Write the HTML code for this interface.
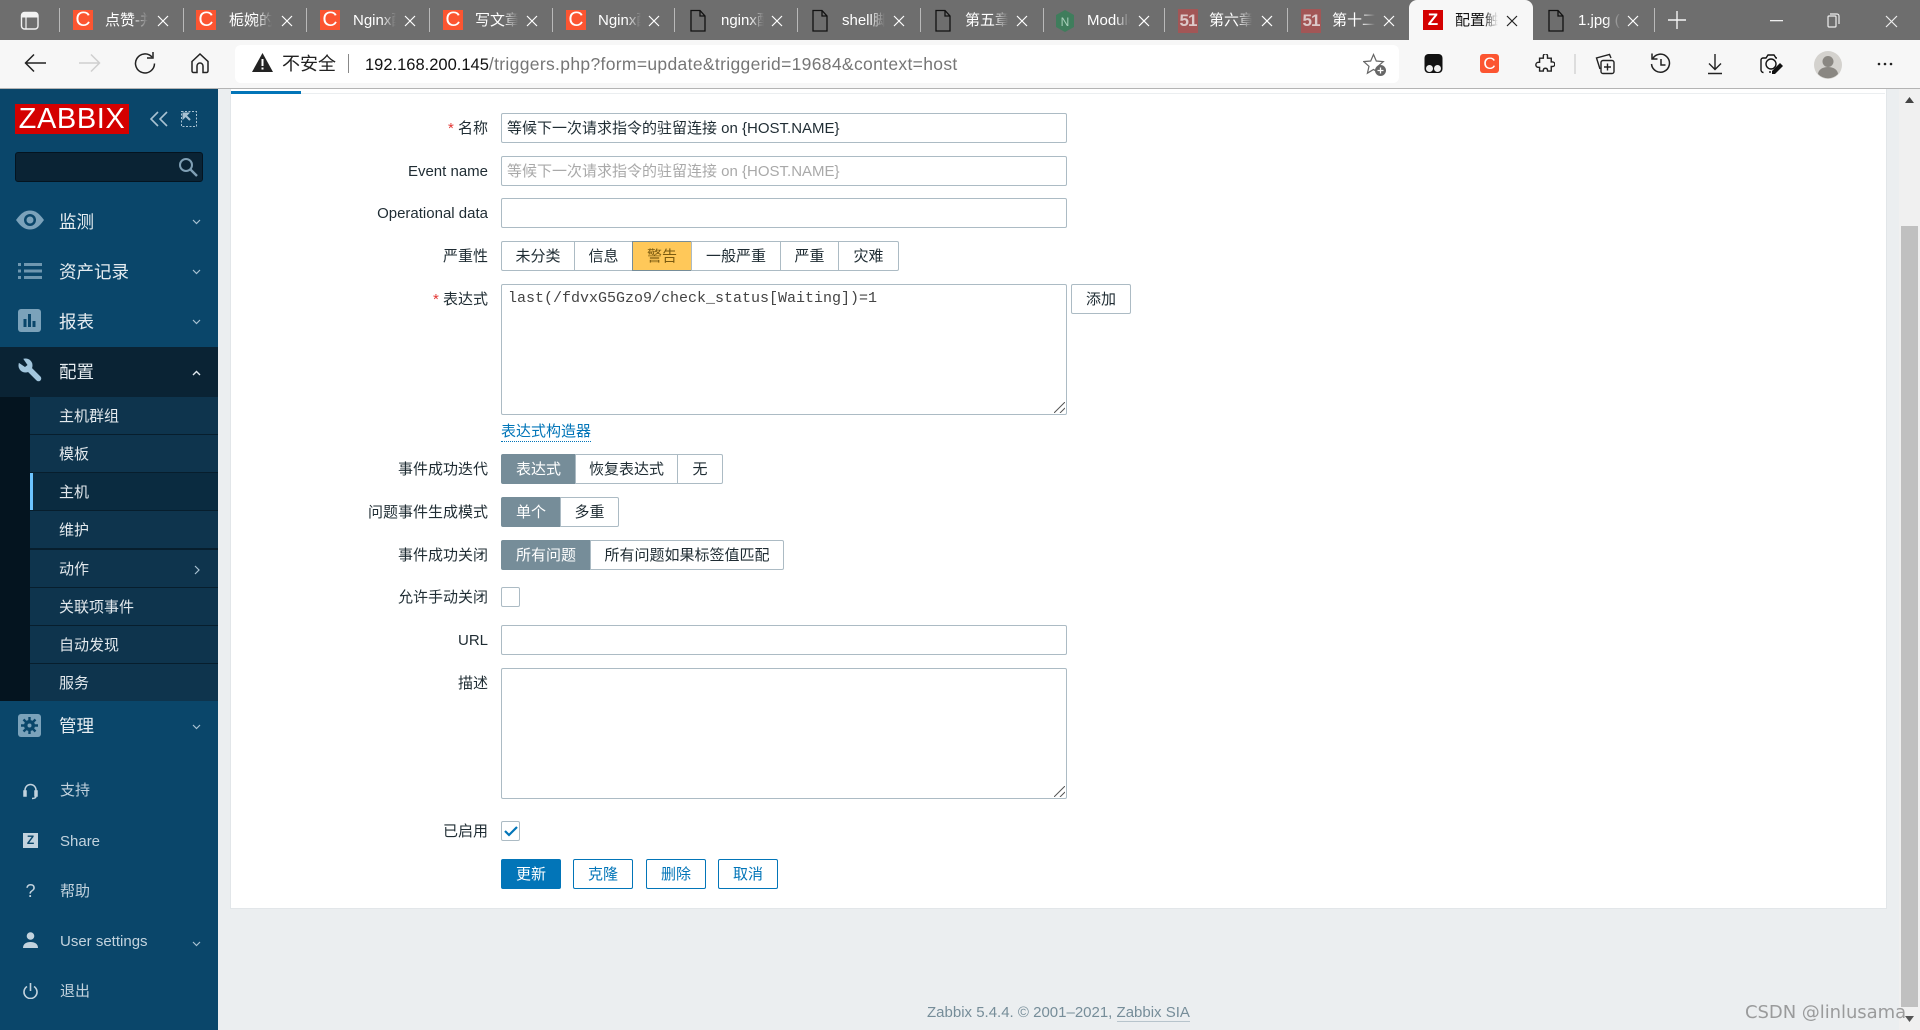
<!DOCTYPE html>
<html lang="zh"><head><meta charset="utf-8"><title>配置触发器</title>
<style>
*{box-sizing:border-box}
html,body{margin:0;padding:0;width:1920px;height:1030px;overflow:hidden;background:#ebeef0;font-family:"Liberation Sans","Noto Sans CJK SC",sans-serif;color:#1f2c33}
.a,.a>*{position:absolute}
#root>*{position:absolute}
.t{white-space:nowrap}
.sep{width:1px;height:24px;top:8px;background:#b9b9b9}
.fav{width:20px;height:20px;top:10px}
.c{background:#fc5531;color:#fff;font-size:21px;line-height:20px;text-align:center;font-weight:400}
.tt{top:10px;height:22px;line-height:21px;font-size:15px;color:#fff;width:43px;overflow:hidden;white-space:nowrap;-webkit-mask-image:linear-gradient(90deg,#000 65%,transparent 100%);mask-image:linear-gradient(90deg,#000 65%,transparent 100%)}
.x{width:12px;height:12px;top:15px}
.l{left:300px;width:188px;text-align:right;font-size:15px;line-height:20px;white-space:nowrap}
.r{color:#e33734}
.in{left:501px;width:566px;height:30px;background:#fff;border:1px solid #acbbc4;border-radius:2px;font-size:15px;line-height:30px;padding-left:5px;white-space:nowrap}
.s{top:0;height:100%;border:1px solid #acbbc4;background:#fff;text-align:center;font-size:15px;line-height:30px;color:#1f2c33;margin-right:-1px;white-space:nowrap}
.on{background:#768d99;border-color:#768d99;color:#fff}
.b{top:859px;height:30px;width:60px;border:1px solid #0275b8;border-radius:2px;color:#0275b8;background:#fff;text-align:center;font-size:15px;line-height:30px}
.cb{left:501px;width:19px;height:20px;background:#fff;border:1px solid #acbbc4;border-radius:2px}
.m{left:59px;font-size:17.5px;color:#e6edf1;line-height:24px;white-space:nowrap}
.ch{left:192px;width:9px;height:6px}
.sub{left:30px;width:188px;height:38px;background:#0e344d;border-bottom:1px solid #071e2d;font-size:15px;color:#e3e9ed;line-height:39px;padding-left:29px;white-space:nowrap}
.u{left:60px;font-size:15px;color:#c3d3de;line-height:20px;white-space:nowrap}
.ff{left:0;background:#a25656;color:#dcc8c8;font:bold 17px/23px 'Liberation Sans';text-align:center;height:24px;width:20px;top:9px;letter-spacing:-1px}
</style></head><body>
<div id="root">
<svg width="0" height="0" style="position:absolute"><defs>
<symbol id="x" viewBox="0 0 12 12"><path d="M1 1 11 11M11 1 1 11" stroke="#fff" stroke-width="1.2" fill="none"/></symbol>
<symbol id="xd" viewBox="0 0 12 12"><path d="M1 1 11 11M11 1 1 11" stroke="#222" stroke-width="1.2" fill="none"/></symbol>
<symbol id="f" viewBox="0 0 20 24"><path d="M3 1.500h9l5 5.500v15H3zM12 1.500V7h5" stroke="#111" stroke-width="1.3" fill="none"/></symbol>
<symbol id="d" viewBox="0 0 9 6"><path d="M1 1l3.500 3.500L8 1" stroke="#a9c2d2" stroke-width="1.2" fill="none"/></symbol>
<symbol id="up" viewBox="0 0 9 6"><path d="M1 5l3.500-3.500L8 5" stroke="#e0e8ee" stroke-width="1.400" fill="none"/></symbol>
</defs></svg>

<!-- tab strip -->
<div style="left:0;top:0;width:1920px;height:40px;background:#6e6e6e"></div>
<svg style="left:20px;top:11px" width="20" height="20" viewBox="0 0 20 20"><rect x="1.500" y="1.500" width="16.500" height="16.500" rx="3" fill="#6e6e6e" stroke="#f2f2f2" stroke-width="1.400"/><path d="M1.500 6.500h16.500V4a2.500 2.500 0 0 0-2.500-2.500h-11.500A2.500 2.500 0 0 0 1.500 4z" fill="#f2f2f2"/><path d="M6 6v12" stroke="#f2f2f2" stroke-width="1.200"/></svg>
<div class="sep" style="left:59px"></div><div class="sep" style="left:183px"></div><div class="sep" style="left:306px"></div><div class="sep" style="left:429px"></div><div class="sep" style="left:552px"></div><div class="sep" style="left:674px"></div><div class="sep" style="left:797px"></div><div class="sep" style="left:920px"></div><div class="sep" style="left:1043px"></div><div class="sep" style="left:1164px"></div><div class="sep" style="left:1287px"></div><div class="sep" style="left:1654px"></div>

<div class="fav c" style="left:73px">C</div><div class="tt" style="left:105px">点赞-并发</div><svg class="x" style="left:157px"><use href="#x"/></svg>
<div class="fav c" style="left:196px">C</div><div class="tt" style="left:229px">栀婉的博</div><svg class="x" style="left:281px"><use href="#x"/></svg>
<div class="fav c" style="left:320px">C</div><div class="tt" style="left:353px">Nginx配</div><svg class="x" style="left:404px"><use href="#x"/></svg>
<div class="fav c" style="left:443px">C</div><div class="tt" style="left:475px">写文章-</div><svg class="x" style="left:526px"><use href="#x"/></svg>
<div class="fav c" style="left:566px">C</div><div class="tt" style="left:598px">Nginx配</div><svg class="x" style="left:648px"><use href="#x"/></svg>
<svg class="fav" style="left:688px;height:24px;top:9px"><use href="#f"/></svg><div class="tt" style="left:721px">nginx配</div><svg class="x" style="left:771px"><use href="#x"/></svg>
<svg class="fav" style="left:810px;height:24px;top:9px"><use href="#f"/></svg><div class="tt" style="left:842px">shell脚本</div><svg class="x" style="left:893px"><use href="#x"/></svg>
<svg class="fav" style="left:933px;height:24px;top:9px"><use href="#f"/></svg><div class="tt" style="left:965px">第五章</div><svg class="x" style="left:1016px"><use href="#x"/></svg>
<svg style="left:1055px;top:9px" width="20" height="24" viewBox="0 0 20 24"><path d="M10 1 19 6v12l-9 5-9-5V6z" fill="#3f7d5c"/><text x="10" y="17" font-size="12" fill="#a9d0bb" text-anchor="middle" font-family="Liberation Sans">N</text></svg><div class="tt" style="left:1087px">Module</div><svg class="x" style="left:1138px"><use href="#x"/></svg>
<div class="fav ff" style="left:1178px">51</div><div class="tt" style="left:1209px">第六章</div><svg class="x" style="left:1261px"><use href="#x"/></svg>
<div class="fav ff" style="left:1301px">51</div><div class="tt" style="left:1332px">第十二</div><svg class="x" style="left:1383px"><use href="#x"/></svg>
<div style="left:1409px;top:0;width:124px;height:42px;background:#f7f7f7;border-radius:8px 8px 0 0"></div>
<div class="fav" style="left:1423px;background:#d40000;color:#fff;font:bold 17px/20px 'Liberation Sans';text-align:center">Z</div><div class="tt" style="left:1455px;color:#111">配置触发</div><svg class="x" style="left:1506px"><use href="#xd"/></svg>
<svg class="fav" style="left:1546px;height:24px;top:9px"><use href="#f"/></svg><div class="tt" style="left:1578px">1.jpg (</div><svg class="x" style="left:1627px"><use href="#x"/></svg>
<svg style="left:1668px;top:11px" width="18" height="18"><path d="M9 0v18M0 9h18" stroke="#f5f5f5" stroke-width="1.400"/></svg>
<svg style="left:1770px;top:20px" width="13" height="2"><rect width="13" height="1.300" fill="#eee"/></svg>
<svg style="left:1827px;top:13px" width="13" height="15" fill="none" stroke="#eee" stroke-width="1.200"><rect x="1" y="3" width="8" height="11" rx="1"/><path d="M3 1h7a2 2 0 0 1 2 2v8"/></svg>
<svg style="left:1885px;top:15px" width="13" height="13"><path d="M1 1 12 12M12 1 1 12" stroke="#eee" stroke-width="1.200"/></svg>

<!-- toolbar -->
<div style="left:0;top:40px;width:1920px;height:48px;background:#f7f7f7"></div>
<div style="left:0;top:88px;width:1920px;height:1px;background:#b4b4b4"></div>
<svg style="left:24px;top:51px" width="22" height="24" fill="none" stroke="#222" stroke-width="1.500"><path d="M22 12H2M10 3.500 1.500 12l8.500 8.500"/></svg>
<svg style="left:79px;top:51px" width="22" height="24" fill="none" stroke="#cfcfcf" stroke-width="1.500"><path d="M0 12h20M12 3.500 20.500 12 12 20.500"/></svg>
<svg style="left:134px;top:52px" width="22" height="22" fill="none" stroke="#222" stroke-width="1.500"><path d="M18 5a9.500 9.500 0 1 0 2.500 6.500"/><path d="M19 0v6h-6"/></svg>
<svg style="left:190px;top:52px" width="20" height="22" fill="none" stroke="#222" stroke-width="1.500"><path d="M2 9.500 10 2l8 7.500V19a1.500 1.500 0 0 1-1.500 1.500H13V14a3 3 0 0 0-6 0v6.500H3.500A1.500 1.500 0 0 1 2 19z"/></svg>
<div style="left:235px;top:45px;width:1164px;height:38px;background:#fff;border-radius:6px"></div>
<svg style="left:252px;top:53px" width="21" height="19"><path d="M10.500 0 21 19H0z" fill="#222"/><rect x="9.500" y="6" width="2" height="7" fill="#fff"/><rect x="9.500" y="14.500" width="2" height="2" fill="#fff"/></svg>
<div class="t" style="left:282px;top:52px;font-size:18px;line-height:24px;color:#222">不安全</div>
<div style="left:348px;top:54px;width:1px;height:19px;background:#888"></div>
<div class="t" style="left:365px;top:52px;font-size:16.5px;line-height:24px;color:#767676"><span style="color:#111">192.168.200.145</span><span style="font-size:17.5px;letter-spacing:.33px">/triggers.php?form=update&amp;triggerid=19684&amp;context=host</span></div>
<svg style="left:1363px;top:53px" width="24" height="24" fill="none"><path d="M10.500 1.500l2.800 6.500 7 .6-5.300 4.700 1.600 6.900-6.100-3.700-6.100 3.700 1.600-6.900L.7 8.600l7-.6z" stroke="#666" stroke-width="1.200"/><circle cx="17.500" cy="17.500" r="5.500" fill="#666"/><path d="M17.500 14.500v6M14.500 17.500h6" stroke="#fff" stroke-width="1.300"/></svg>
<svg style="left:1424px;top:54px" width="20" height="20"><rect x="0.500" y="0" width="18" height="19" rx="4" fill="#111"/><circle cx="5.500" cy="14.500" r="3.500" fill="#eee"/><circle cx="13.500" cy="14.500" r="3.500" fill="#eee"/></svg>
<div class="c" style="left:1480px;top:54px;width:19px;height:19px;border-radius:3px;line-height:19px;font-size:17px">C</div>
<svg style="left:1535px;top:54px" width="20" height="20" viewBox="0 0 24 24" fill="none" stroke="#222" stroke-width="1.700"><path d="M10 2a2.500 2.500 0 0 1 5 .5V5h4.500v4.500H21a2.700 2.700 0 0 1 0 5.500h-1.500v5.500H15V19a2.600 2.600 0 0 0-5 0v1.500H5.500V16H4a3 3 0 0 1 0-6h1.500V5H10z"/></svg>
<div style="left:1574px;top:54px;width:2px;height:20px;background:#ddd"></div>
<svg style="left:1594px;top:53px" width="24" height="23" fill="none" stroke="#222" stroke-width="1.400"><path d="M6 16 2.500 5l13-3.500L17 5"/><rect x="7" y="7.500" width="13" height="13" rx="2"/><path d="M13.500 10.500v7M10 14h7"/></svg>
<svg style="left:1650px;top:52px" width="22" height="24" fill="none" stroke="#222" stroke-width="1.500"><path d="M2.500 7a9 9 0 1 1-1 5"/><path d="M2 1.500V7h5.500M11 7v6h4.500"/></svg>
<svg style="left:1706px;top:53px" width="18" height="22" fill="none" stroke="#222" stroke-width="1.400"><path d="M9 1v15M3 10.500 9 16.500l6-6M2 20.500h14"/></svg>
<svg style="left:1760px;top:52px" width="24" height="24" fill="none" stroke="#111" stroke-width="1.400"><path d="M3.500 20.500A2.500 2.500 0 0 1 1 18V8a2 2 0 0 1 2-2h3l2-3h6l2 3h1"/><circle cx="11" cy="12" r="5"/><path d="M11 20h-2" /><path d="M12 19l8-8 3 3-8 8h-3z" fill="#111" stroke="none"/></svg>
<svg style="left:1813px;top:50px" width="30" height="30"><circle cx="15" cy="15" r="14" fill="#d4d2ce"/><circle cx="15" cy="11.500" r="5.500" fill="#8a8782"/><path d="M5 24a10 7 0 0 1 20 0 14 14 0 0 1-20 0z" fill="#8a8782"/></svg>
<svg style="left:1877px;top:62px" width="16" height="4" fill="#222"><circle cx="2" cy="2" r="1.300"/><circle cx="8" cy="2" r="1.300"/><circle cx="14" cy="2" r="1.300"/></svg>

<!-- sidebar -->
<div style="left:0;top:89px;width:218px;height:941px;background:#0a466a"></div>
<div style="left:15px;top:104px;width:114px;height:30px;background:#d40000;color:#fff;font-size:29px;line-height:30px;text-align:center;letter-spacing:.6px;white-space:nowrap">ZABBIX</div>
<svg style="left:150px;top:111px" width="18" height="16" fill="none" stroke="#a9c2d2" stroke-width="1.600"><path d="M8 1 1 8l7 7M17 1l-7 7 7 7"/></svg>
<svg style="left:181px;top:111px" width="16" height="16" fill="none" stroke="#a9c2d2"><rect x=".5" y=".5" width="15" height="15" stroke-dasharray="2 1.500"/><path d="M2 2l6 0-6 6z" fill="#a9c2d2"/><path d="M3 3l6 6" stroke-width="2"/></svg>
<div style="left:15px;top:152px;width:188px;height:30px;background:#0a2334;border:1px solid #041420;border-radius:3px"></div>
<svg style="left:178px;top:157px" width="20" height="20" fill="none" stroke="#7f9fb4" stroke-width="2"><circle cx="8" cy="8" r="6"/><path d="M12.500 12.500 19 19" stroke-width="2.400"/></svg>

<svg style="left:16px;top:210px" width="28" height="20"><path d="M0 10C5 3 9 .5 14 .5S23 3 28 10c-5 7-9 9.500-14 9.500S5 17 0 10z" fill="#7ba2ba"/><circle cx="14" cy="10" r="6" fill="#0a466a"/><circle cx="14" cy="10" r="3.500" fill="#7ba2ba"/></svg>
<div class="m" style="top:210px">监测</div><svg class="ch" style="top:219px"><use href="#d"/></svg>
<svg style="left:18px;top:263px" width="24" height="17" fill="#6f97b0"><rect y="0" width="3" height="3"/><rect y="6.500" width="3" height="3"/><rect y="13" width="3" height="3"/><rect x="6" y="0" width="18" height="3"/><rect x="6" y="6.500" width="18" height="3"/><rect x="6" y="13" width="18" height="3"/></svg>
<div class="m" style="top:260px">资产记录</div><svg class="ch" style="top:269px"><use href="#d"/></svg>
<svg style="left:18px;top:309px" width="23" height="23"><rect width="23" height="23" rx="3" fill="#7ba2ba"/><rect x="5.500" y="10" width="3" height="8" fill="#0a466a"/><rect x="10" y="5" width="3" height="13" fill="#0a466a"/><rect x="14.500" y="12" width="3" height="6" fill="#0a466a"/></svg>
<div class="m" style="top:310px">报表</div><svg class="ch" style="top:319px"><use href="#d"/></svg>
<div style="left:0;top:347px;width:218px;height:50px;background:#0a2334"></div>
<svg style="left:18px;top:358px" width="24" height="24"><circle cx="7.500" cy="7.500" r="7" fill="#a2c6dd"/><path d="M9 9 20.500 20.500" stroke="#a2c6dd" stroke-width="5.500" stroke-linecap="round"/><path d="M-1 3.500 7 9 9.500 7 4 -1 -1 -1z" fill="#0a2334"/></svg>
<div class="m" style="top:360px">配置</div><svg class="ch" style="top:370px"><use href="#up"/></svg>

<div style="left:0;top:397px;width:30px;height:304px;background:#04141f"></div>
<div class="sub" style="top:397px">主机群组</div>
<div class="sub" style="top:435px">模板</div>
<div class="sub" style="top:473px;background:#0a2b40">主机</div>
<div style="left:30px;top:473px;width:3px;height:37px;background:#6cc4ff"></div>
<div class="sub" style="top:511px;height:39px;border-bottom-width:2px">维护</div>
<div class="sub" style="top:550px">动作</div>
<svg style="left:194px;top:565px" width="7" height="10" fill="none" stroke="#a9c2d2" stroke-width="1.200"><path d="M1 1l4 4-4 4"/></svg>
<div class="sub" style="top:588px">关联项事件</div>
<div class="sub" style="top:626px">自动发现</div>
<div class="sub" style="top:664px;height:37px;border-bottom:0">服务</div>

<svg style="left:18px;top:714px" width="23" height="23"><rect width="23" height="23" rx="3" fill="#7ba2ba"/><circle cx="11.500" cy="11.500" r="5.500" fill="#0a466a"/><circle cx="11.500" cy="11.500" r="2" fill="#7ba2ba"/><path d="M11.500 3v3.500M11.500 16.500V20M3 11.500h3.500M16.500 11.500H20M5.500 5.500 8 8M15 15l2.500 2.500M17.500 5.500 15 8M8 15l-2.500 2.500" stroke="#0a466a" stroke-width="2.400"/></svg>
<div class="m" style="top:714px">管理</div><svg class="ch" style="top:724px"><use href="#d"/></svg>

<svg style="left:23px;top:783px" width="15" height="17" fill="none" stroke="#c3d3de" stroke-width="1.500"><path d="M2 10V7a5.500 5.500 0 0 1 11 0v3"/><rect x="1" y="8" width="2" height="5" fill="#c3d3de"/><rect x="12" y="8" width="2" height="5" fill="#c3d3de"/><path d="M13 13c0 2-2 2.500-4 2.500"/></svg>
<div class="u" style="top:781px">支持</div>
<div style="left:23px;top:833px;width:15px;height:15px;background:#c3d3de;color:#0a466a;font:bold 12px/15px 'Liberation Sans';text-align:center">Z</div>
<div class="u" style="top:832px">Share</div>
<div style="left:23px;top:880px;width:15px;font-size:18px;line-height:22px;text-align:center;color:#c3d3de">?</div>
<div class="u" style="top:882px">帮助</div>
<svg style="left:23px;top:932px" width="15" height="16" fill="#c3d3de"><circle cx="7.500" cy="4" r="3.800"/><path d="M0 16c0-4 3-6 7.500-6S15 12 15 16z"/></svg>
<div class="u" style="top:932px">User settings</div><svg class="ch" style="top:941px"><use href="#d"/></svg>
<svg style="left:23px;top:982px" width="15" height="17" fill="none" stroke="#c3d3de" stroke-width="1.600"><path d="M4 4.500a6.500 6.500 0 1 0 7 0M7.500 1v8"/></svg>
<div class="u" style="top:982px">退出</div>

<!-- card -->
<div style="left:230px;top:89px;width:1657px;height:820px;background:#fff;border:1px solid #e2e6e9;border-top:0"></div>
<div style="left:231px;top:93px;width:1654px;height:1px;background:#ebeef0"></div>
<div style="left:231px;top:91px;width:70px;height:3px;background:#0275b8"></div>

<div class="l" style="top:119px"><span class="r">*</span> 名称</div>
<div class="in" style="top:113px">等候下一次请求指令的驻留连接 on {HOST.NAME}</div>
<div class="l" style="top:162px">Event name</div>
<div class="in" style="top:156px;color:#a9a9a9">等候下一次请求指令的驻留连接 on {HOST.NAME}</div>
<div class="l" style="top:204px">Operational data</div>
<div class="in" style="top:198px"></div>

<div class="l" style="top:247px">严重性</div>
<div class="a" style="left:501px;top:241px;width:398px;height:30px">
<div class="s" style="left:0;width:74px;border-radius:2px 0 0 2px">未分类</div>
<div class="s" style="left:73px;width:59px">信息</div>
<div class="s" style="left:131px;width:60px;background:#ffc859;border-color:#768d99;color:#7a5a10">警告</div>
<div class="s" style="left:190px;width:90px">一般严重</div>
<div class="s" style="left:279px;width:59px">严重</div>
<div class="s" style="left:337px;width:61px;border-radius:0 2px 2px 0">灾难</div>
</div>

<div class="l" style="top:290px"><span class="r">*</span> 表达式</div>
<div class="in" style="top:284px;height:131px;font-family:'Liberation Mono','Noto Sans CJK SC',monospace;line-height:28px;padding-left:6px;letter-spacing:0;color:#444">last(/fdvxG5Gzo9/check_status[Waiting])=1</div>
<svg style="left:1054px;top:402px" width="11" height="11" fill="none" stroke="#555"><path d="M0 11 11 0M6 11l5-5"/></svg>
<div style="left:1071px;top:284px;width:60px;height:30px;background:#fff;border:1px solid #acbbc4;border-radius:2px;text-align:center;font-size:15px;line-height:30px">添加</div>
<div class="t" style="left:501px;top:422px;font-size:15px;line-height:19px;color:#0275b8;border-bottom:1px dotted #0275b8">表达式构造器</div>

<div class="l" style="top:460px">事件成功迭代</div>
<div class="a" style="left:501px;top:454px;width:222px;height:30px">
<div class="s on" style="left:0;width:75px;border-radius:2px 0 0 2px">表达式</div>
<div class="s" style="left:74px;width:103px">恢复表达式</div>
<div class="s" style="left:176px;width:46px;border-radius:0 2px 2px 0">无</div>
</div>
<div class="l" style="top:503px">问题事件生成模式</div>
<div class="a" style="left:501px;top:497px;width:118px;height:30px">
<div class="s on" style="left:0;width:60px;border-radius:2px 0 0 2px">单个</div>
<div class="s" style="left:59px;width:59px;border-radius:0 2px 2px 0">多重</div>
</div>
<div class="l" style="top:546px">事件成功关闭</div>
<div class="a" style="left:501px;top:540px;width:283px;height:30px">
<div class="s on" style="left:0;width:90px;border-radius:2px 0 0 2px">所有问题</div>
<div class="s" style="left:89px;width:194px;border-radius:0 2px 2px 0">所有问题如果标签值匹配</div>
</div>
<div class="l" style="top:588px">允许手动关闭</div>
<div class="cb" style="top:587px"></div>
<div class="l" style="top:631px">URL</div>
<div class="in" style="top:625px"></div>
<div class="l" style="top:674px">描述</div>
<div class="in" style="top:668px;height:131px"></div>
<svg style="left:1054px;top:786px" width="11" height="11" fill="none" stroke="#555"><path d="M0 11 11 0M6 11l5-5"/></svg>
<div class="l" style="top:822px">已启用</div>
<div class="cb" style="top:821px"></div>
<svg style="left:504px;top:826px" width="14" height="11" fill="none" stroke="#0275b8" stroke-width="2.200"><path d="M1 5l4 4 8-8"/></svg>

<div class="b" style="left:501px;background:#0275b8;color:#fff">更新</div>
<div class="b" style="left:573px">克隆</div>
<div class="b" style="left:646px">删除</div>
<div class="b" style="left:718px">取消</div>

<div class="t" style="left:927px;top:1003px;font-size:15px;line-height:20px;color:#768d99">Zabbix 5.4.4. © 2001–2021, <span style="border-bottom:1px solid #b7c4cc">Zabbix SIA</span></div>

<!-- scrollbar -->
<div style="left:1899px;top:89px;width:21px;height:941px;background:#f0f0f0"></div>
<div style="left:1901px;top:226px;width:17px;height:781px;background:#c0c0c0"></div>
<svg style="left:1905px;top:97px" width="9" height="6"><path d="M4.500 0 9 6H0z" fill="#444"/></svg>
<svg style="left:1905px;top:1016px" width="9" height="6"><path d="M0 0h9L4.500 6z" fill="#555"/></svg>

<div class="t" style="left:1745px;top:1001px;font-family:'DejaVu Sans',sans-serif;font-size:18px;line-height:24px;color:rgba(110,110,110,.65);letter-spacing:-.05px">CSDN @linlusama</div>
</div>
</body></html>
